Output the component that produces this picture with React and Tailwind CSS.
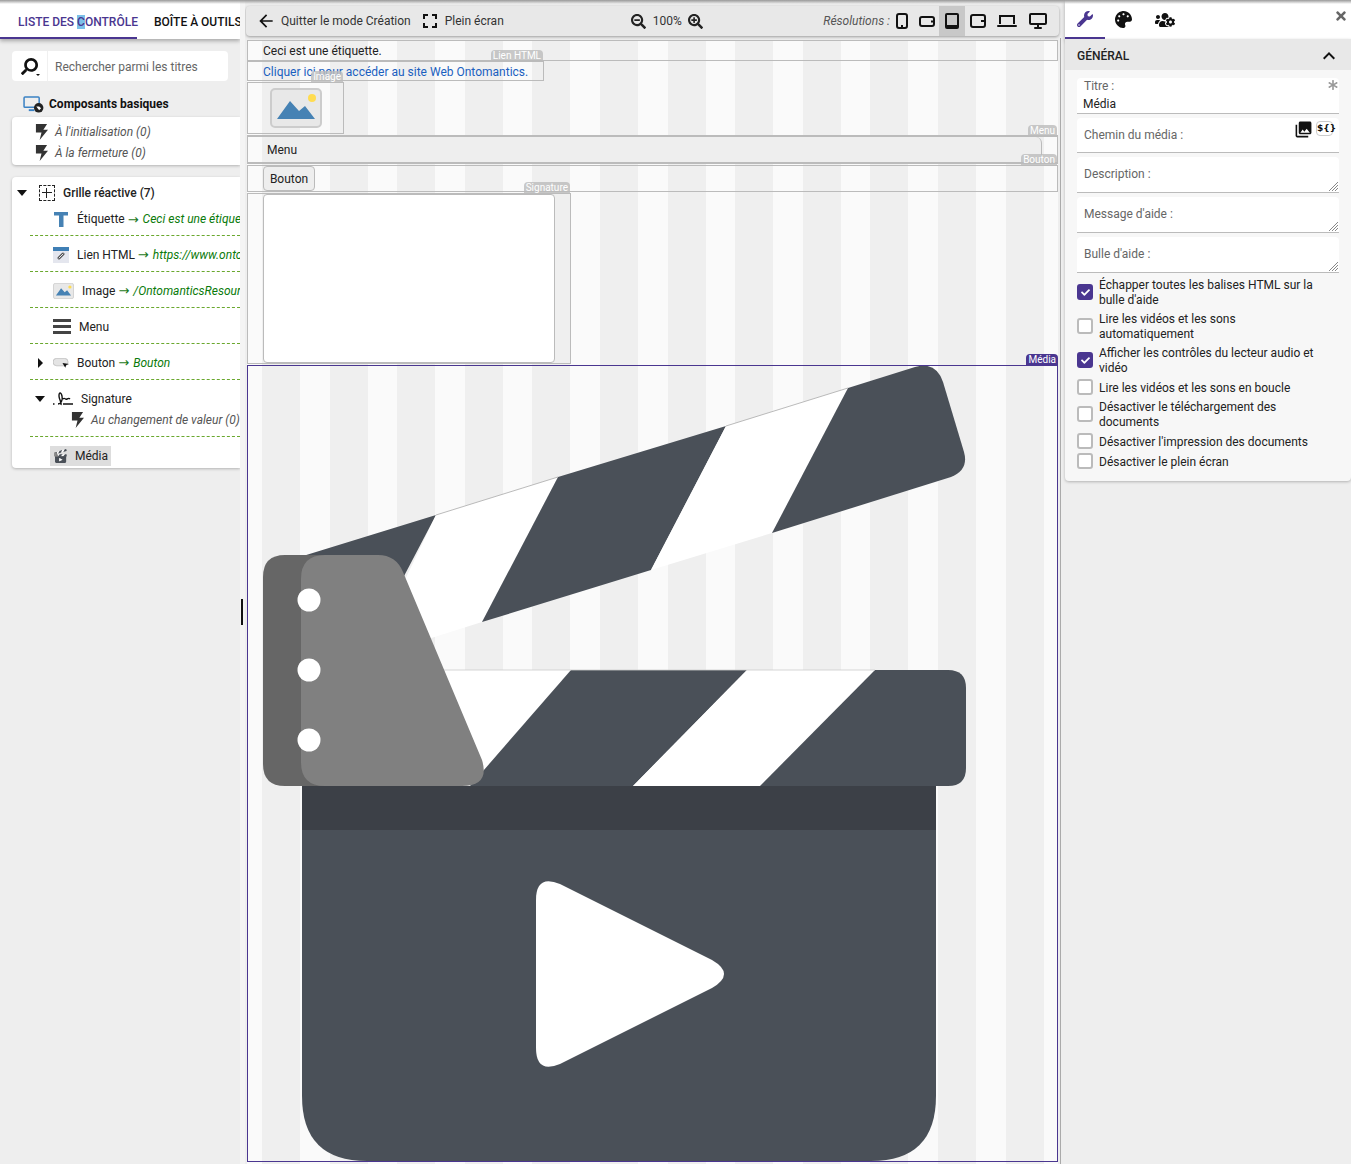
import {
  FaAsterisk,
  FaPalette,
  FaSearch,
  FaSearchMinus,
  FaSearchPlus,
  FaTimes,
  FaUsersCog,
  FaWrench,
  FaCheck,
} from "react-icons/fa";
import { MdArrowBack, MdExpandLess, MdPhotoLibrary } from "react-icons/md";

function Clapper({ viewBox = "248 366 809 795", className }) {
  return (
    <svg viewBox={viewBox} className={className}>
      {/* top stick */}
      <path d="M290 560 L436 515 L403 578 L400 600 Z" fill="#4a5058" />
      <path d="M436 515 L558 477 L482 622 L425 640 L400 590 Z" fill="#fff" />
      <path d="M558 477 L726 426 L651 570 L482 622 Z" fill="#4a5058" />
      <path d="M726 426 L848 388 L772 533 L651 570 Z" fill="#fff" />
      <path d="M848 388 L915 367 Q936 361 943 382 L964 452 Q969 470 951 477 L772 533 Z" fill="#4a5058" />
      <path d="M436 515 L558 477 M726 426 L848 388" stroke="#aaa" strokeWidth="0.8" fill="none" />
      {/* lower bar */}
      <path d="M400 670 L571 670 L470 786 L400 786 Z" fill="#fff" />
      <path d="M571 670 L747 670 L633 786 L470 786 Z" fill="#4a5058" />
      <path d="M747 670 L875 670 L760 786 L633 786 Z" fill="#fff" />
      <path d="M875 670 L948 670 Q966 670 966 688 L966 768 Q966 786 948 786 L760 786 Z" fill="#4a5058" />
      <path d="M420 670 L875 670" stroke="#ccc" strokeWidth="0.8" fill="none" />
      {/* body */}
      <path d="M302 786 L936 786 L936 1096 Q936 1161 871 1161 L367 1161 Q302 1161 302 1096 Z" fill="#4a5058" />
      <rect x="302" y="786" width="634" height="44" fill="#3c4047" />
      <path d="M536 900 Q536 874 560 884 L712 960 Q736 974 712 988 L560 1064 Q536 1074 536 1048 Z" fill="#fff" />
      {/* hinge */}
      <path d="M285 555 L340 555 L340 786 L285 786 Q263 786 263 764 L263 577 Q263 555 285 555 Z" fill="#666" />
      <path d="M325 555 L378 555 Q396 555 403 572 L482 760 Q490 786 462 786 L325 786 Q301 786 301 762 L301 579 Q301 555 325 555 Z" fill="#808080" />
      <circle cx="309" cy="600" r="11.5" fill="#fff" />
      <circle cx="309" cy="670" r="11.5" fill="#fff" />
      <circle cx="309" cy="740" r="11.5" fill="#fff" />
    </svg>
  );
}

function ImageIcon({ className }) {
  return (
    <svg viewBox="0 0 52 40" className={className}>
      <rect x="1" y="1" width="50" height="38" rx="4" fill="#e8e8e8" stroke="#ccc" strokeWidth="2" />
      <path d="M7 31 L20 13 L29 23 L35 18 L45 31 Z" fill="#4682b4" />
      <circle cx="42" cy="10" r="4" fill="#ffdc50" />
    </svg>
  );
}

function Bolt() {
  return (
    <svg viewBox="0 0 14 17" className="w-[13px] h-[16px] shrink-0">
      <path d="M1 0h12l-4 6h5L5 17l2-8H1z" fill="#333" />
    </svg>
  );
}

function ScreenIcon({ type }) {
  if (type === "phone")
    return (
      <svg viewBox="0 0 12 16" className="h-[16px] w-[12px]">
        <rect x="1" y="1" width="10" height="14" rx="2" fill="none" stroke="#111" strokeWidth="2" />
        <rect x="5" y="12" width="2" height="2" fill="#111" />
      </svg>
    );
  if (type === "phoneH")
    return (
      <svg viewBox="0 0 16 11" className="h-[11px] w-[16px]">
        <rect x="1" y="1" width="14" height="9" rx="2" fill="none" stroke="#111" strokeWidth="2" />
        <rect x="12" y="4.5" width="2" height="2" fill="#111" />
      </svg>
    );
  if (type === "tablet")
    return (
      <svg viewBox="0 0 14 16" className="h-[16px] w-[14px]">
        <rect x="0" y="0" width="14" height="16" rx="2" fill="#111" />
        <rect x="2" y="2" width="10" height="10" fill="#c8c8c8" />
      </svg>
    );
  if (type === "tabletH")
    return (
      <svg viewBox="0 0 16 14" className="h-[14px] w-[16px]">
        <rect x="1" y="1" width="14" height="12" rx="2" fill="none" stroke="#111" strokeWidth="2" />
        <rect x="11" y="6" width="4" height="2" fill="#111" />
      </svg>
    );
  if (type === "laptop")
    return (
      <svg viewBox="0 0 20 14" className="h-[14px] w-[20px]">
        <path d="M3 10V2h14v8" fill="none" stroke="#111" strokeWidth="2" />
        <rect x="0" y="11" width="20" height="2" rx="1" fill="#111" />
      </svg>
    );
  return (
    <svg viewBox="0 0 18 16" className="h-[16px] w-[18px]">
      <rect x="1" y="1" width="16" height="10" rx="1" fill="none" stroke="#111" strokeWidth="2" />
      <rect x="8" y="11" width="2" height="3" fill="#111" />
      <rect x="5" y="14" width="8" height="2" rx="1" fill="#111" />
    </svg>
  );
}

function TreeRow({ children }) {
  return (
    <div className="flex items-center h-[36px] pt-[2px] ml-[18px] border-b border-dashed border-[#6aa82e]">
      {children}
    </div>
  );
}

function Arrow({ value }) {
  return (
    <>
      <span className="ml-[3px] font-['DejaVu_Sans'] text-[13px] leading-none text-[#1a7a1a]">→</span>
      <span className="ml-[4px] italic text-[#0a7a0a]">{value}</span>
    </>
  );
}

function Event({ label, className }) {
  return (
    <div className={`flex items-center h-[21px] ${className}`}>
      <Bolt />
      <span className="ml-[7px] italic text-[12px] text-[#555] whitespace-nowrap">{label}</span>
    </div>
  );
}

function LeftPanel() {
  return (
    <div className="w-[240px] shrink-0 overflow-hidden">
      <div className="flex h-[39px] bg-white shadow-[0_2px_4px_rgba(0,0,0,0.3)] text-[12px] font-medium whitespace-nowrap">
        <div className="w-[137px] shrink-0 pl-[18px] pt-[13px] border-b-2 border-[#4a3690] text-[#4a3690]">
          LISTE DES <span className="bg-[#7cc0e8]">C</span>ONTRÔLE
        </div>
        <div className="pl-[17px] pt-[13px] text-[#111]">BOÎTE À OUTILS</div>
      </div>

      {/* Search */}
      <div className="flex items-center h-[30px] w-[216px] ml-[12px] mt-[12px] bg-white rounded">
        <div className="relative flex items-center justify-center w-[36px] h-full border-r border-[#f0f0f0]">
          <FaSearch className="text-[#111] text-[17px] -scale-x-100" />
          <span className="absolute left-[24px] top-[23px] w-0 h-0 border-x-[2px] border-t-[2px] border-x-transparent border-t-[#111]" />
        </div>
        <span className="pl-[7px] pt-[1px] text-[12px] text-[#666]">Rechercher parmi les titres</span>
      </div>

      <div className="flex items-center h-[24px] mt-[11px] ml-[23px]">
        <svg viewBox="0 0 22 18" className="w-[21px] h-[17px]">
          <path d="M2 1h14a1 1 0 0 1 1 1v9a1 1 0 0 1-1 1H2a1 1 0 0 1-1-1V2a1 1 0 0 1 1-1z" fill="none" stroke="#3b82c4" strokeWidth="1.6" />
          <rect x="6" y="14" width="6" height="2" fill="#3b82c4" />
          <circle cx="16.5" cy="12.5" r="5" fill="#222" />
          <path d="M14 11h3l2 2-2 2z" fill="#fff" />
        </svg>
        <span className="ml-[5px] text-[12px] font-bold text-[#111]">Composants basiques</span>
      </div>

      {/* Events */}
      <div className="ml-[12px] h-[48px] mt-[1px] pt-[4px] pl-[23px] bg-white rounded-l shadow-[0_1px_3px_rgba(0,0,0,0.25)]">
        <Event label="À l'initialisation (0)" />
        <Event label="À la fermeture (0)" />
      </div>

      {/* Tree */}
      <div className="ml-[12px] h-[291px] mt-[12px] bg-white rounded-l shadow-[0_1px_3px_rgba(0,0,0,0.25)] text-[12px] text-[#222] whitespace-nowrap overflow-hidden">
        <div className="flex items-center h-[31px]">
          <span className="ml-[5px] w-0 h-0 border-x-[5px] border-t-[6px] border-x-transparent border-t-[#111]" />
          <span className="ml-[12px] w-[16px] h-[16px] relative border border-dashed border-[#222]">
            <span className="absolute left-[6px] top-[2px] w-px h-[10px] bg-[#222]" />
            <span className="absolute left-[2px] top-[6px] h-px w-[10px] bg-[#222]" />
          </span>
          <span className="ml-[8px] font-medium">Grille réactive (7)</span>
        </div>
        <div className="flex items-center h-[28px] pb-[5px] ml-[18px] border-b border-dashed border-[#6aa82e]">
          <svg viewBox="0 0 14 15" className="ml-[24px] w-[14px] h-[15px] shrink-0">
            <rect width="14" height="3.5" fill="#4682b4" />
            <rect x="5" width="4.5" height="15" fill="#4682b4" />
          </svg>
          <span className="ml-[9px]">Étiquette</span>
          <Arrow value="Ceci est une étiquette." />
        </div>
        <TreeRow>
          <svg viewBox="0 0 16 16" className="ml-[23px] w-[16px] h-[16px] shrink-0">
            <rect width="16" height="16" fill="#e4e6ee" />
            <rect width="16" height="4" fill="#3f7fb5" />
            <path d="M6 11l4-4" stroke="#555" strokeWidth="3" strokeLinecap="round" />
            <path d="M6 11l4-4" stroke="#e4e6ee" strokeWidth="1" strokeLinecap="round" />
          </svg>
          <span className="ml-[8px]">Lien HTML</span>
          <Arrow value="https://www.ontomantics.com" />
        </TreeRow>
        <TreeRow>
          <ImageIcon className="ml-[23px] w-[21px] h-[16px] shrink-0" />
          <span className="ml-[8px]">Image</span>
          <Arrow value="/OntomanticsResources/image.png" />
        </TreeRow>
        <TreeRow>
          <div className="ml-[23px] w-[18px] flex flex-col gap-[3px]">
            <span className="h-[3px] bg-[#444]" />
            <span className="h-[3px] bg-[#444]" />
            <span className="h-[3px] bg-[#444]" />
          </div>
          <span className="ml-[8px]">Menu</span>
        </TreeRow>
        <TreeRow>
          <span className="ml-[8px] w-0 h-0 border-y-[5px] border-l-[5px] border-y-transparent border-l-[#111]" />
          <svg viewBox="0 0 18 10" className="ml-[10px] w-[17px] h-[10px] shrink-0">
            <rect x="0" y="0" width="16" height="8" rx="4" fill="#e4e4e4" stroke="#aaa" strokeWidth="0.6" />
            <path d="M10 5l7 1-3 1-1 3z" fill="#111" />
          </svg>
          <span className="ml-[7px]">Bouton</span>
          <Arrow value="Bouton" />
        </TreeRow>
        <div className="h-[57px] ml-[18px] border-b border-dashed border-[#6aa82e]">
          <div className="flex items-center h-[37px]">
            <span className="ml-[5px] w-0 h-0 border-x-[5px] border-t-[6px] border-x-transparent border-t-[#111]" />
            <svg viewBox="0 0 20 14" className="ml-[8px] w-[20px] h-[14px] shrink-0">
              <path d="M0 12h1.5M5 12c3 0 5-4 4-8S6 0 6 4s3 6 2 9M10 7c2-2 2 1 4 0s2-1 3 0M10 12h10" fill="none" stroke="#111" strokeWidth="1.4" />
            </svg>
            <span className="ml-[8px]">Signature</span>
          </div>
          <Event label="Au changement de valeur (0)" className="ml-[41px] -mt-[8px]" />
        </div>
        <div className="ml-[38px] mt-[9px] w-[61px] h-[20px] flex items-center bg-[#ddd]">
          <Clapper viewBox="262 365 704 797" className="ml-[4px] w-[13px] h-[14px] shrink-0" />
          <span className="ml-[8px]">Média</span>
        </div>
      </div>
    </div>
  );
}

function Tag({ children, className }) {
  return (
    <span
      className={`absolute h-[12px] px-[2px] rounded-t text-[10px] leading-[12px] text-white whitespace-nowrap bg-[#bbb]/80 ${className}`}
    >
      {children}
    </span>
  );
}

function Center() {
  return (
    <div className="w-[815px] shrink-0 pl-[1px]">
      <div className="flex items-center h-[30px] mt-[6px] mr-[1px] bg-[#e8e8e8] rounded-sm shadow-[0_1px_3px_rgba(0,0,0,0.35)] text-[12px] text-[#333] whitespace-nowrap">
        <MdArrowBack className="ml-[10px] text-[20px] text-[#111]" />
        <span className="ml-[5px]">Quitter le mode Création</span>
        <svg viewBox="0 0 14 14" className="ml-[12px] w-[14px] h-[14px]">
          <path d="M1 5V1h4M9 1h4v4M13 9v4H9M5 13H1V9" fill="none" stroke="#111" strokeWidth="2" />
        </svg>
        <span className="ml-[8px]">Plein écran</span>
        <FaSearchMinus className="ml-[127px] text-[15px] text-[#222]" />
        <span className="ml-[7px]">100%</span>
        <FaSearchPlus className="ml-[6px] text-[15px] text-[#222]" />
        <span className="ml-auto italic text-[#555]">Résolutions :</span>
        <div className="flex items-center h-full mr-[6px]">
          <span className="w-[24px] flex justify-center"><ScreenIcon type="phone" /></span>
          <span className="w-[25px] flex justify-center"><ScreenIcon type="phoneH" /></span>
          <span className="w-[26px] h-full flex items-center justify-center bg-[#c8c8c8]"><ScreenIcon type="tablet" /></span>
          <span className="w-[26px] flex justify-center"><ScreenIcon type="tabletH" /></span>
          <span className="w-[32px] flex justify-center"><ScreenIcon type="laptop" /></span>
          <span className="w-[30px] flex justify-center"><ScreenIcon type="desktop" /></span>
        </div>
      </div>

      {/* Canvas */}
      <div className="relative mt-[4px] ml-[1px] w-[811px] h-[1124px] text-[12px] text-[#222] bg-[repeating-linear-gradient(90deg,#fafafa_0,#fafafa_15px,#efefef_15px,#efefef_53px,#fafafa_53px,#fafafa_67.6px)]">
        <div className="h-[21px] border border-[#bbb] pl-[15px] leading-[20px]">Ceci est une étiquette.</div>
        <div className="relative w-[297px] h-[20px] border border-[#bbb] pl-[15px] leading-[20px] text-[#1a5fc0] whitespace-nowrap">
          Cliquer ici pour accéder au site Web Ontomantics.
          <Tag className="right-0 -top-[12px]">Lien HTML</Tag>
        </div>
        <div className="relative w-[97px] h-[52px] mt-[1px] border border-[#bbb] pl-[22px] pt-[5px]">
          <ImageIcon className="w-[52px] h-[40px]" />
          <Tag className="right-0 -top-[12px]">Image</Tag>
        </div>
        <div className="relative h-[29px] mt-[1px] border-x border-[#bbb] border-y-2 pl-[15px]">
          <div className="w-[779px] h-full px-[4px] bg-[#eee] border-r border-[#bbb] rounded-md leading-[27px]">Menu</div>
          <Tag className="right-0 -top-[12px]">Menu</Tag>
        </div>
        <div className="relative h-[27px] mt-[1px] border border-[#bbb] pl-[15px]">
          <div className="w-[52px] h-[25px] bg-[#eee] border border-[#bbb] rounded text-center leading-[25px]">Bouton</div>
          <Tag className="right-0 -top-[12px]">Bouton</Tag>
        </div>
        <div className="relative w-[324px] h-[171px] mt-[1px] border border-[#bbb] pl-[15px]">
          <div className="w-[292px] h-[169px] bg-white border border-[#bbb] rounded" />
          <Tag className="right-0 -top-[12px]">Signature</Tag>
        </div>
        <div className="relative h-[797px] mt-[1px] border border-[#4a3690]">
          <Clapper className="block w-[809px] h-[795px]" />
          <span className="absolute right-[-1px] -top-[12px] h-[12px] px-[2px] rounded-t text-[10px] leading-[12px] text-white bg-[#4a3690]">
            Média
          </span>
        </div>
      </div>
    </div>
  );
}

function Field({ label, resize, height = 36, children }) {
  return (
    <div
      className="relative w-[262px] ml-[12px] mb-[4px] bg-white rounded-t border-b border-[#bbb] pl-[7px] text-[12px] text-[#666]"
      style={{ height }}
    >
      <div className="pt-[8px]">{label}</div>
      {children}
      {resize && (
        <svg viewBox="0 0 10 10" className="absolute right-[1px] bottom-[1px] w-[10px] h-[10px]">
          <path d="M1 10L10 1M4 10l6-6M7 10l3-3" stroke="#888" strokeWidth="1" />
        </svg>
      )}
    </div>
  );
}

function Check({ checked, label }) {
  return (
    <div className="flex items-center ml-[12px] mb-[4px]">
      <span
        className={`flex items-center justify-center w-[16px] h-[16px] shrink-0 rounded-[3px] border-2 ${
          checked ? "bg-[#4a3690] border-[#4a3690]" : "bg-white border-[#bbb]"
        }`}
      >
        {checked && <FaCheck className="text-white text-[9px]" />}
      </span>
      <span className="relative top-[1px] ml-[6px] w-[225px] text-[12px] leading-[15px] text-[#222]">{label}</span>
    </div>
  );
}

function RightPanel() {
  return (
    <div className="relative w-[286px] shrink-0 ml-[5px]">
      <div className="flex items-center h-[39px] bg-white shadow-[0_2px_4px_rgba(0,0,0,0.3)]">
        <div className="flex items-center justify-center w-[40px] h-full border-b-2 border-[#4a3690]">
          <FaWrench className="text-[#4a3690] text-[16px]" />
        </div>
        <FaPalette className="ml-[10px] text-[#111] text-[17px]" />
        <FaUsersCog className="ml-[23px] text-[#111] text-[20px]" />
        <FaTimes className="absolute right-[3px] top-[9px] text-[#666] text-[14px]" />
      </div>
      <div className="h-[442px] bg-[#f7f7f7] rounded-b shadow-[0_1px_3px_rgba(0,0,0,0.25)]">
        <div className="flex items-center justify-between h-[31px] pl-[12px] pr-[12px] pt-[3px] bg-[#e8e8e8] text-[12px] font-medium text-[#222]">
          GÉNÉRAL
          <MdExpandLess className="text-[24px] text-[#111] -mr-[2px]" />
        </div>
        <div className="pt-[8px]">
          <div className="relative w-[262px] h-[36px] ml-[12px] mb-[4px] bg-white rounded-t border-b border-[#bbb] pl-[7px] text-[12px] text-[#666]">
            <div className="pt-[1px] leading-[15px]">Titre :</div>
            <div className="-ml-[1px] pt-[3px] leading-[15px] text-[#222]">Média</div>
            <FaAsterisk className="absolute right-[1px] top-[2px] text-[10px] text-[#999]" />
          </div>
          <Field label="Chemin du média :" height={35}>
            <MdPhotoLibrary className="absolute right-[26px] top-[2px] text-[#111] text-[19px]" />
            <span className="absolute right-[6px] top-[3px] w-[17px] h-[15px] text-center bg-white border border-[#ccc] rounded-sm font-['DejaVu_Sans'] text-[9px] leading-[13px] font-bold text-[#111]">
              {"${}"}
            </span>
          </Field>
          <Field label="Description :" resize />
          <Field label="Message d'aide :" resize />
          <Field label="Bulle d'aide :" resize />
          <Check checked label="Échapper toutes les balises HTML sur la bulle d'aide" />
          <Check label="Lire les vidéos et les sons automatiquement" />
          <Check checked label="Afficher les contrôles du lecteur audio et vidéo" />
          <Check label="Lire les vidéos et les sons en boucle" />
          <Check label="Désactiver le téléchargement des documents" />
          <Check label="Désactiver l'impression des documents" />
          <Check label="Désactiver le plein écran" />
        </div>
      </div>
    </div>
  );
}

export default function App() {
  return (
    <div className="relative flex w-[1351px] h-[1164px] overflow-hidden bg-[#eee] font-[Roboto,sans-serif]">
      <LeftPanel />
      <div className="relative w-[5px] shrink-0 bg-[#f4f4f4]">
        <span className="absolute left-[1px] top-[599px] w-[2px] h-[26px] bg-[#111]" />
      </div>
      <Center />
      <div className="absolute left-[1060px] top-[38px] bottom-0 w-[1px] bg-[#aaa]" />
      <RightPanel />
      <div className="absolute inset-x-0 top-0 h-[4px] bg-gradient-to-b from-[#999] to-transparent" />
    </div>
  );
}
